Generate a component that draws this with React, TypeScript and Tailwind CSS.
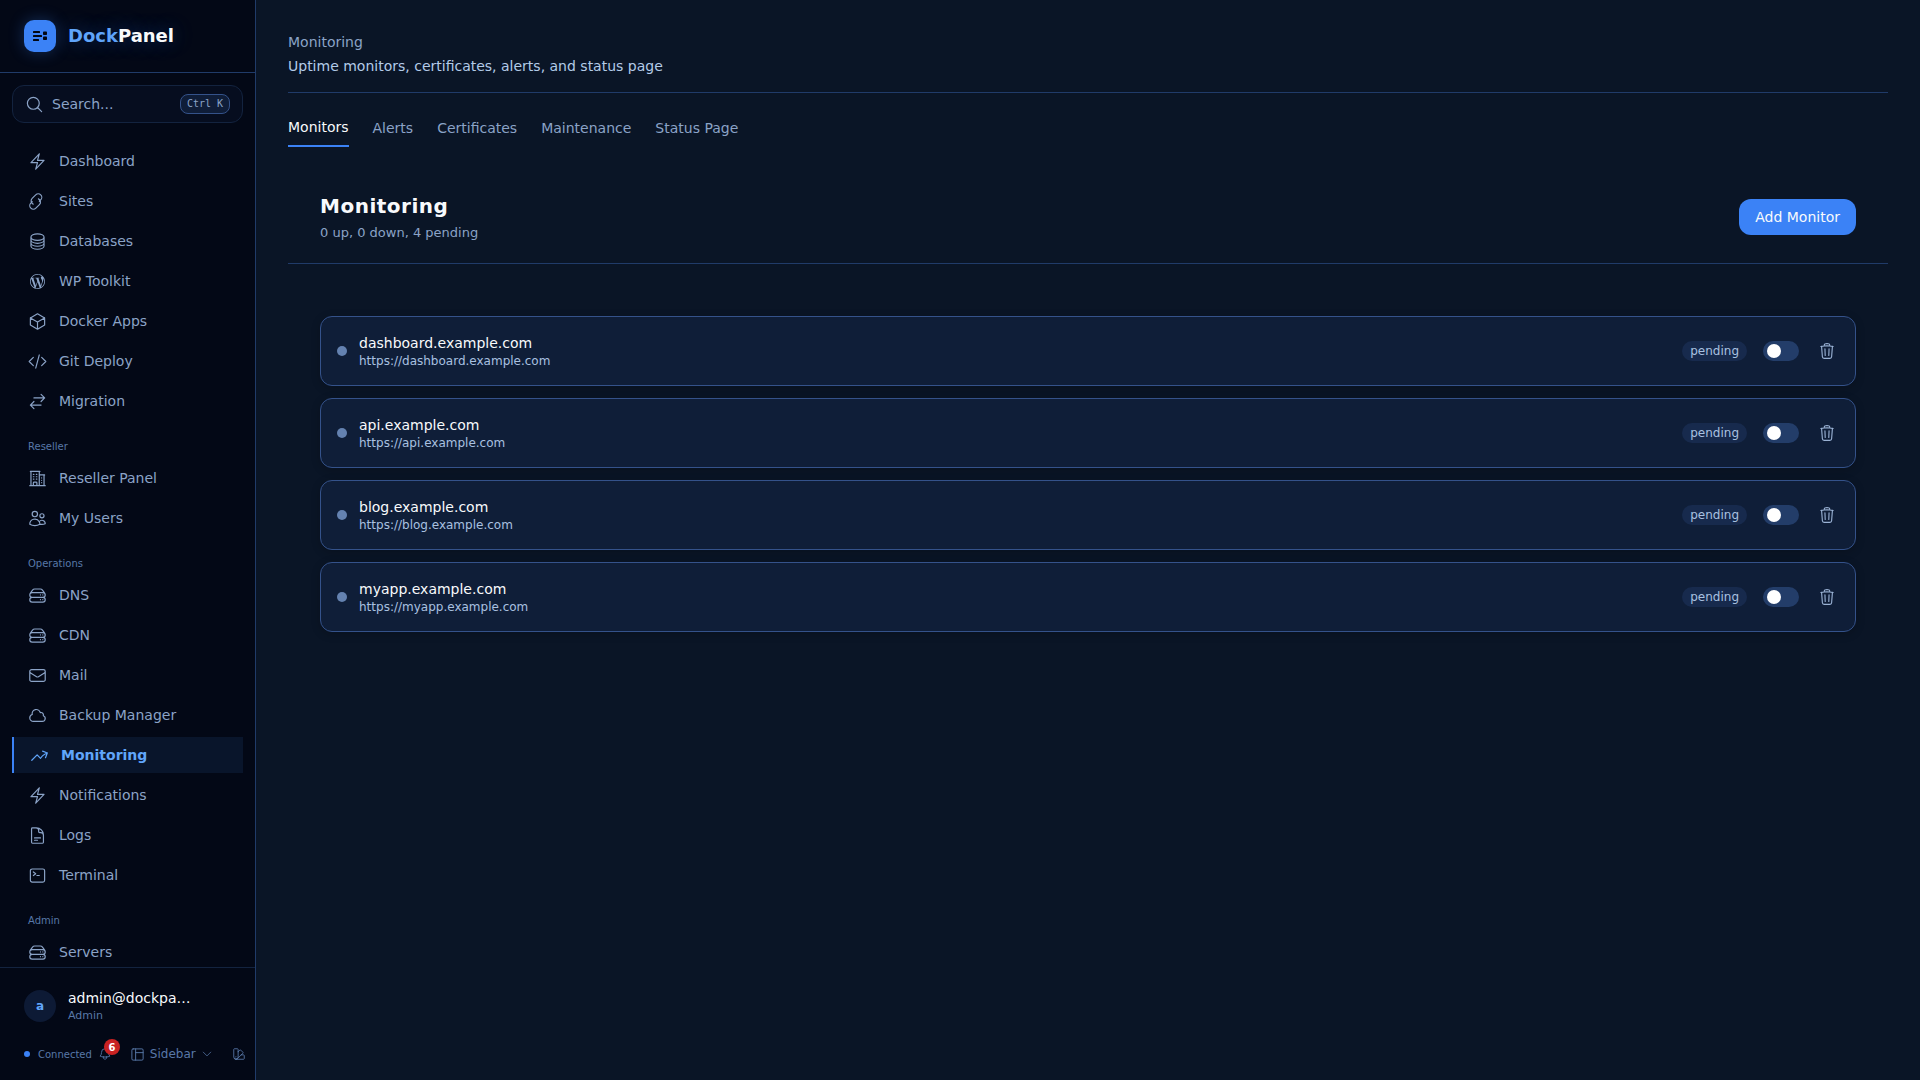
import React from "react";
import {
  HiOutlineArrowsRightLeft,
  HiOutlineArrowTrendingUp,
  HiOutlineBell,
  HiOutlineBolt,
  HiOutlineBuildingOffice2,
  HiOutlineChevronDown,
  HiOutlineCircleStack,
  HiOutlineCloud,
  HiOutlineCodeBracket,
  HiOutlineCommandLine,
  HiOutlineCube,
  HiOutlineDocumentText,
  HiOutlineEnvelope,
  HiOutlineMagnifyingGlass,
  HiOutlineServerStack,
  HiOutlineSwatch,
  HiOutlineTrash,
  HiOutlineUsers,
} from "react-icons/hi2";
import { SiWordpress } from "react-icons/si";

type IconType = React.ComponentType<{ className?: string }>;

function ChainIcon({ className }: { className?: string }) {
  return (
    <svg viewBox="0 0 24 24" fill="none" stroke="currentColor" strokeWidth={1.5} strokeLinecap="round" strokeLinejoin="round" className={className}>
      <path d="M13.19 8.688a4.5 4.5 0 0 1 1.242 7.244l-4.5 4.5a4.5 4.5 0 0 1-6.364-6.364l1.757-1.757m9-.622 1.757-1.757a4.5 4.5 0 0 0-6.364-6.364l-4.5 4.5a4.5 4.5 0 0 0 1.242 7.244" />
    </svg>
  );
}

function WordpressIcon({ className }: { className?: string }) {
  return (
    <span className={className}>
      <SiWordpress className="m-0.5 size-[15px]" />
    </span>
  );
}

function SidebarIcon({ className }: { className?: string }) {
  return (
    <svg viewBox="0 0 24 24" fill="none" stroke="currentColor" strokeWidth={1.5} strokeLinecap="round" strokeLinejoin="round" className={className}>
      <rect x="3" y="3" width="18" height="18" rx="2" />
      <path d="M9 3v18M9 9h12" />
    </svg>
  );
}

function LogoMark() {
  return (
    <svg viewBox="0 0 14 10" fill="#030712" className="h-[10px] w-[14px]" aria-hidden="true">
      <rect x="0" y="0" width="7" height="2" rx="0.5" />
      <rect x="0" y="4" width="9" height="2" rx="0.5" />
      <rect x="0" y="8" width="6" height="2" rx="0.5" />
      <rect x="10" y="0.5" width="4" height="3.5" rx="0.8" />
      <rect x="10" y="5.5" width="4" height="3.5" rx="0.8" />
    </svg>
  );
}

const groups: { title?: string; items: { label: string; icon: IconType; active?: boolean }[] }[] = [
  {
    items: [
      { label: "Dashboard", icon: HiOutlineBolt },
      { label: "Sites", icon: ChainIcon },
      { label: "Databases", icon: HiOutlineCircleStack },
      { label: "WP Toolkit", icon: WordpressIcon },
      { label: "Docker Apps", icon: HiOutlineCube },
      { label: "Git Deploy", icon: HiOutlineCodeBracket },
      { label: "Migration", icon: HiOutlineArrowsRightLeft },
    ],
  },
  {
    title: "Reseller",
    items: [
      { label: "Reseller Panel", icon: HiOutlineBuildingOffice2 },
      { label: "My Users", icon: HiOutlineUsers },
    ],
  },
  {
    title: "Operations",
    items: [
      { label: "DNS", icon: HiOutlineServerStack },
      { label: "CDN", icon: HiOutlineServerStack },
      { label: "Mail", icon: HiOutlineEnvelope },
      { label: "Backup Manager", icon: HiOutlineCloud },
      { label: "Monitoring", icon: HiOutlineArrowTrendingUp, active: true },
      { label: "Notifications", icon: HiOutlineBolt },
      { label: "Logs", icon: HiOutlineDocumentText },
      { label: "Terminal", icon: HiOutlineCommandLine },
    ],
  },
  { title: "Admin", items: [{ label: "Servers", icon: HiOutlineServerStack }] },
];

const tabs = ["Monitors", "Alerts", "Certificates", "Maintenance", "Status Page"];
const monitors = ["dashboard.example.com", "api.example.com", "blog.example.com", "myapp.example.com"];

function Sidebar() {
  return (
    <aside className="flex w-64 shrink-0 flex-col border-r border-[#203b69] bg-[#030816]">
      <div className="flex items-center gap-3 border-b border-[#203b69] px-6 py-5">
        <span className="flex size-8 items-center justify-center rounded-[10px] bg-[#3b82f6] shadow-[0_0_16px_rgba(59,130,246,0.3)]">
          <LogoMark />
        </span>
        <span className="text-lg font-bold text-slate-50 [text-shadow:0_0_20px_rgba(59,130,246,0.4)]">
          <span className="text-[#60a5fa]">Dock</span>Panel
        </span>
      </div>

      <div className="px-3 pt-3">
        <button className="flex w-full items-center gap-2 rounded-xl border border-[#13233f] bg-[#060d1f] px-3 py-2 text-left text-sm text-[#8ba3c7]">
          <HiOutlineMagnifyingGlass className="size-[19px]" />
          <span className="flex-1">Search...</span>
          <kbd className="rounded-lg border border-[#34528a] bg-[#0f1d38] px-1.5 py-0.5 font-['DejaVu_Sans_Mono',monospace] text-[10px] leading-[14px]">
            Ctrl K
          </kbd>
        </button>
      </div>

      <nav className="min-h-0 flex-1 overflow-hidden px-3 pt-5">
        {groups.map((group, i) => (
          <div key={i}>
            {group.title && <h2 className="px-4 pt-5 pb-1.5 text-[10px] leading-[15px] text-[#5878a8]">{group.title}</h2>}
            <ul className="flex flex-col gap-1">
              {group.items.map(({ label, icon: Icon, active }) => (
                <li key={label}>
                  <a
                    href="#"
                    aria-current={active ? "page" : undefined}
                    className={
                      active
                        ? "flex items-center gap-3 border-l-2 border-[#3b82f6] bg-[#09152b] px-4 py-2 text-sm font-bold text-[#60a5fa]"
                        : "flex items-center gap-3 px-4 py-2 text-sm text-[#8ba3c7]"
                    }
                  >
                    <Icon className="size-[19px] shrink-0" />
                    {label}
                  </a>
                </li>
              ))}
            </ul>
          </div>
        ))}
      </nav>

      <footer className="border-t border-[#13233f] pt-5 pr-[9px] pb-[17px] pl-6">
        <div className="flex items-center gap-3">
          <span className="flex size-8 shrink-0 items-center justify-center rounded-full bg-[#0d1a35] text-xs font-bold text-[#60a5fa]">a</span>
          <div className="min-w-0">
            <p className="text-sm leading-5 text-slate-50">admin@dockpa…</p>
            <p className="text-[11px] leading-4 text-[#5878a8]">Admin</p>
          </div>
        </div>
        <div className="mt-[21px] flex items-center text-[#5878a8]">
          <span className="size-1.5 rounded-full bg-[#3b82f6]" />
          <span className="ml-2 text-[10px]">Connected</span>
          <button className="relative ml-1 p-0.5" aria-label="Notifications, 6 unread">
            <HiOutlineBell className="size-3.5" />
            <span className="absolute -top-1.5 -right-1.5 flex size-4 items-center justify-center rounded-full bg-[#c92222] text-[10px] font-bold text-white">
              6
            </span>
          </button>
          <button className="ml-4 flex items-center gap-[5px] text-xs">
            <SidebarIcon className="size-[15px]" />
            Sidebar
            <HiOutlineChevronDown className="size-3" />
          </button>
          <button className="ml-auto" aria-label="Theme">
            <HiOutlineSwatch className="size-3.5" />
          </button>
        </div>
      </footer>
    </aside>
  );
}

function MonitorCard({ host }: { host: string }) {
  return (
    <li className="flex items-center gap-3 rounded-xl border border-[#34528a] bg-[#0f1e38] px-4 py-4 shadow-[0_2px_10px_rgba(0,0,0,0.2)]">
      <span className="size-2.5 shrink-0 rounded-full bg-[#6482b0]" />
      <div className="min-w-0 flex-1">
        <p className="truncate text-sm leading-5 text-slate-50">{host}</p>
        <p className="truncate text-xs leading-4 text-[#a9c1e0]">https://{host}</p>
      </div>
      <span className="rounded-full bg-[#172a4d] px-2 py-0.5 text-xs leading-4 text-[#a9c1e0]">pending</span>
      <button role="switch" aria-checked="false" aria-label={`Enable ${host}`} className="ml-1 flex h-5 w-9 items-center rounded-full bg-[#233d69] px-1">
        <span className="size-3.5 rounded-full bg-white" />
      </button>
      <button aria-label={`Delete ${host}`} className="ml-1 p-[3px] text-[#9ab2d4]">
        <HiOutlineTrash className="size-[18px]" />
      </button>
    </li>
  );
}

export default function App() {
  return (
    <div className="flex h-screen bg-[#0a1526] font-['DejaVu_Sans',sans-serif]">
      <Sidebar />
      <main className="min-w-0 flex-1 px-8 pt-8">
        <header className="border-b border-[#203b69] pb-4">
          <h1 className="text-sm leading-5 text-[#8ba3c7]">Monitoring</h1>
          <p className="mt-1 text-sm leading-5 text-[#b3cbe8]">Uptime monitors, certificates, alerts, and status page</p>
        </header>
        <div role="tablist" className="mt-6 flex gap-6">
          {tabs.map((tab, i) => (
            <button
              key={tab}
              role="tab"
              aria-selected={i === 0}
              className={
                i === 0
                  ? "border-b-2 border-[#3b82f6] pb-2 text-sm leading-5 text-slate-50"
                  : "pb-2 text-sm leading-5 text-[#8ba3c7]"
              }
            >
              {tab}
            </button>
          ))}
        </div>
        <section className="mt-6">
          <div className="flex items-center justify-between border-b border-[#203b69] px-8 py-[21px]">
            <div>
              <h2 className="text-xl leading-7 font-bold tracking-wide text-slate-50">Monitoring</h2>
              <p className="mt-1 text-[13px] leading-[18px] text-[#8ba3c7]">0 up, 0 down, 4 pending</p>
            </div>
            <button className="rounded-xl bg-[#3b82f6] px-4 py-2 text-sm leading-5 text-slate-50">Add Monitor</button>
          </div>
          <ul className="flex flex-col gap-3 px-8 pt-[52px]">
            {monitors.map((host) => (
              <MonitorCard key={host} host={host} />
            ))}
          </ul>
        </section>
      </main>
    </div>
  );
}
